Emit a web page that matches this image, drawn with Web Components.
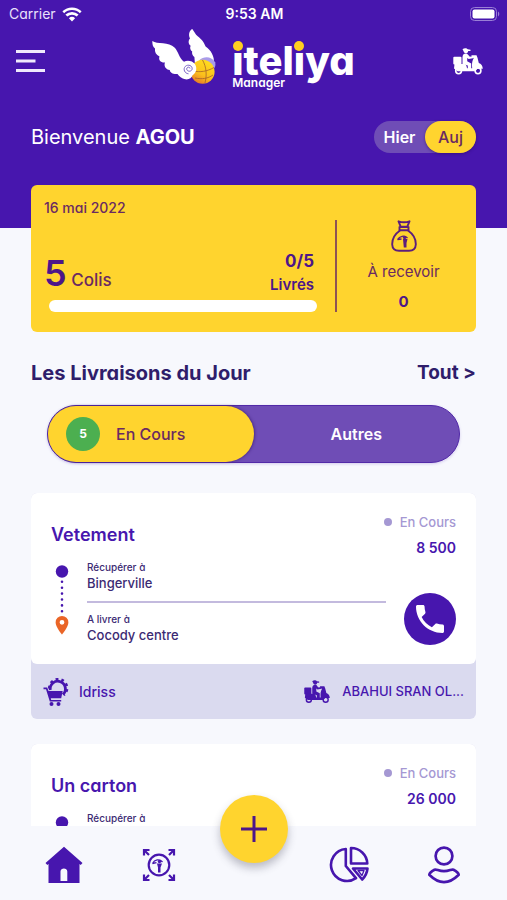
<!DOCTYPE html>
<html lang="fr">
<head>
  <meta charset="utf-8">
  <meta name="viewport" content="width=device-width, initial-scale=1">
  <title>iteliya Manager</title>
  <style>
    :root {
      --purple: #4716ae;
      --purple-soft: #6f4db6;
      --ink: #2f1d6b;
      --yellow: #ffd42e;
      --plum: #6a2a62;
      --page: #f7f8fd;
      --lilac: #a598d3;
    }
    body {
      margin: 0;
      background: var(--page);
      color: var(--ink);
      font-family: Inter, "Noto Sans", sans-serif;
      font-feature-settings: "cv11";
    }
  </style>
</head>
<body>
  <manager-app></manager-app>

  <script>
    'use strict';

    (function () {
      // every drawing of the app, by name
      const icons = {
        wifi: `<svg viewBox="0 0 20 15" width="20" height="15" fill="#fff">
          <path d="M10 14.5 6.900 11.200a4.500 4.500 0 0 1 6.200 0z"/>
          <path d="M3.400 7.600a9.400 9.400 0 0 1 13.200 0l-1.900 2a6.800 6.800 0 0 0-9.400 0z"/>
          <path d="M.4 4.300a13.900 13.900 0 0 1 19.200 0l-1.700 1.900a11.300 11.300 0 0 0-15.800 0z"/></svg>`,
        battery: `<svg viewBox="0 0 30 14" width="30" height="14">
          <rect x=".5" y=".5" width="26" height="13" rx="4" fill="none" stroke="#9a7fd6"/>
          <rect x="2.500" y="2.500" width="22" height="9" rx="2" fill="#fff"/>
          <path d="M28 4.600c1.700.7 1.700 4.100 0 4.800z" fill="#9a7fd6"/></svg>`,
        menu: `<svg viewBox="0 0 29 22" width="29" height="22" fill="#efe9fc">
          <path d="M0 0h29v3H0zM0 9.500h19.500v3H0zM0 19h29v3H0z"/></svg>`,
        wings: `<svg viewBox="0 0 64 56" width="64" height="56">
          <defs><linearGradient id="ball" x1="0" y1="1" x2=".5" y2="0">
            <stop offset="0" stop-color="#e0602c"/><stop offset=".5" stop-color="#fbc01c"/><stop offset="1" stop-color="#ffd91f"/>
          </linearGradient></defs>
          <path d="M40.300 0C37.500 1.200 36 5.500 38 9.500c-2 2-1.700 5.500.6 7.200-1 2.200-.2 4.600 1.600 5.700-.6 2 .4 4.200 2.200 5.600L43 36l19-1c.6-8-3-13.500-8.400-17.400-2-5.600-5-8-7.600-10.100C43 5 42.400 2.500 40.300 0z" fill="#fff"/>
          <path d="M47 31.500c5-4.500 12-4.500 16.300 2 .5 3-.3 5-1.300 6z" fill="#a99bea"/>
          <circle cx="50.600" cy="42.800" r="12" fill="url(#ball)"/>
          <g fill="none" stroke="#a5622a" stroke-width=".8">
            <path d="M41 42c7 1.500 14 .5 21-3.500M43 49c7 1.500 13 .5 18-3M50.500 31c4 7 4.500 15 2.500 23"/>
          </g>
          <path d="M.3 12C5 15.500 17 12.500 22.500 18.500c4 4 4.500 10.500 9.500 14.200 3-1.700 8.500-1.200 11 2.500 2.500 4 1.200 8.800-2.300 10.800-1 3-4 5-7.500 4.300-3.500-.6-6-2.800-7.700-5.300-4 .6-7.500-1.200-7.700-4-4-.4-6.300-4-4.800-7.500-4.500.3-6.800-2.500-5.500-6-3.500-1.500-5-4.500-4.500-8C.6 18 .3 14.500.3 12z" fill="#fff"/>
          <path d="M38 39.500c0-2-3.500-1.800-3.300.6.2 2.500 4.300 3 5.300.4 1.200-3.600-4-5.900-6.800-3-2.400 2.800-.5 6.900 3.300 7.300" fill="none" stroke="#7d66c8" stroke-width="1"/></svg>`,
        scooter: `<svg viewBox="0 0 30 27" width="30" height="27" fill="currentColor">
          <path d="M9.500 1.300c2-1.700 4.500-1 5.300 0l2.700.5v1.300h-2.300c-.2 3-4.200 3-4.700 0z"/>
          <path d="M9.500 9c.2-2.500 1.500-3.500 3.200-3.500 1.300 0 2 .6 2.600 1.600l1.500 1.600 3.200-.5v2l-4.300.7-1.500-1v3.300l4 2.200v5.800h-3.400v-3.700l-5.300-1.500z"/>
          <rect x=".3" y="8.800" width="8.200" height="7.800" rx="1"/>
          <path d="M1.500 16h9.700c2 0 2.500 2.500 2.800 4.300h5.200c-.4-5 0-7.300 1.500-10L18.500 8.500V7.200h5l1 2.500 1.300 5.300c2.300.9 3.900 2.700 4 5.700h-5.500l-1.800 2.500H4.500L1 20.600z"/>
          <g fill="none" stroke="currentColor" stroke-width="1.600">
            <circle cx="5.600" cy="22.800" r="2.900"/><circle cx="25" cy="22.800" r="2.900"/></g></svg>`,
        bag: `<svg viewBox="0 0 26 32" width="26" height="32" fill="none" stroke="#5d1e7c" stroke-width="1.900" stroke-linejoin="round">
          <path d="M7.500 1.300c3 1 8 1 11 0l-2.300 5.500H9.800zM8.500 7h9v3.200h-9z"/>
          <path d="M9 10.500C4 14 1 19 1.200 24.500 1.400 29 4 30.700 8 30.700h10c4 0 6.600-1.700 6.800-6.200C25 19 22 14 17 10.500"/>
          <path d="M6.500 19.500c2-3.500 7-4.500 10-1.500M6.500 19.500l4-.5" stroke-width="1.300"/>
          <path d="M12 19h4.500l-1 4v4.500h-2.700z" fill="#5d1e7c" stroke="none"/><circle cx="13.600" cy="17.500" r="1.700" fill="#5d1e7c" stroke="none"/></svg>`,
        route: `<svg viewBox="0 0 22 76" width="22" height="76">
          <circle cx="11" cy="12.500" r="6.200" fill="#4716ae"/>
          <path d="M11 22.800v30.500" stroke="#4716ae" stroke-width="2.600" stroke-linecap="round" stroke-dasharray="0 5.900"/>
          <path d="M11 57a6.400 6.400 0 0 0-6.400 6.400C4.600 68 11 75.500 11 75.500s6.400-7.500 6.400-12.100A6.400 6.400 0 0 0 11 57zm0 8.700a2.400 2.400 0 1 1 0-4.800 2.400 2.400 0 0 1 0 4.800z" fill="#ea6527"/></svg>`,
        phone: `<svg viewBox="3 3 18 18" width="28" height="28" fill="#fff">
          <path d="M6.620 10.790c1.440 2.830 3.760 5.140 6.590 6.590l2.200-2.200c.27-.27.67-.36 1.020-.24 1.120.37 2.330.57 3.570.57.55 0 1 .45 1 1V20c0 .55-.45 1-1 1-9.390 0-17-7.610-17-17 0-.55.45-1 1-1h3.500c.55 0 1 .45 1 1 0 1.250.2 2.450.57 3.570.11.35.03.74-.25 1.020z"/></svg>`,
        cart: `<svg viewBox="0 0 26 28" width="26" height="28" fill="#4716ae">
          <path d="M7.300 12a7.600 7.600 0 1 1 12.600 4.500" fill="none" stroke="#4716ae" stroke-width="2.800"/>
          <path d="M6.300 10.500a8.900 8.900 0 1 1 14.500 6.500" fill="none" stroke="#4716ae" stroke-width="2.600" stroke-dasharray="2.800 3"/>
          <path d="M.5 9.500h3.700l1.300 3.600h14.200l-1.500 7.200H7.800l.4 1.600h10v1.700H6.800L3 11.200H.5z"/>
          <circle cx="8.500" cy="26" r="2"/><circle cx="15.500" cy="26" r="2"/></svg>`,
        home: `<svg viewBox="0 0 38 38" width="38" height="38" fill="#4716ae">
          <path fill-rule="evenodd" d="M19 .8 37.500 17l-1.800 2-1.200-1V37h-31V18l-1.200 1L.5 17zM15.500 35h6.800v-9.500c0-4-6.800-4-6.800 0z"/></svg>`,
        scan: `<svg viewBox="0 0 34 34" width="34" height="34" fill="none" stroke="#4716ae" stroke-width="2.200">
          <circle cx="17" cy="17" r="10.300"/>
          <path d="M2 7.500V2h5.500M2 2l5 5M26.500 2H32v5.500M32 2l-5 5M2 26.500V32h5.500M2 32l5-5M26.500 32H32v-5.500M32 32l-5-5"/>
          <path d="M10.500 15.500c2-4 7-5 10-1.500M10.500 15.500l4-.8" stroke-width="1.300"/>
          <path d="M15 15.500h5l-1.500 4v5h-2.500v-5z" fill="#4716ae" stroke="none"/><circle cx="17.500" cy="13.500" r="1.700" fill="#4716ae" stroke="none"/></svg>`,
        pie: `<svg viewBox="0 0 40 38" width="40" height="38" fill="none" stroke="#4716ae" stroke-width="2.600" stroke-linejoin="round">
          <path d="M16.800 3v17l10.200 12.200A16 16 0 1 1 16.800 3z"/>
          <path d="M22 2v15.500h16.300A16.200 16.200 0 0 0 22 2z"/>
          <path d="M24 22.500h14.500c-.5 4.500-2.300 8-5.300 11z"/><path d="M29 24.500h6l-2 5z" stroke-width="1.300"/></svg>`,
        user: `<svg viewBox="0 0 34 38" width="34" height="38" fill="none" stroke="#4716ae" stroke-width="2.700" stroke-linejoin="round">
          <circle cx="17" cy="10" r="8.400"/>
          <path d="M7.500 23.700c2-.9 4 1.500 9.500 1.500s7.500-2.400 9.500-1.500c2.500 1.300 5 3.100 5.200 5.100C27 33.500 22 36.200 17 36.200S7 33.500 2.300 28.800c.2-2 2.700-3.800 5.200-5.100z"/></svg>`,
        plus: `<svg viewBox="0 0 26 26" width="26" height="26" fill="none" stroke="#4d1689" stroke-width="3"><path d="M13 0v26M0 13h26"/></svg>`,
      };

      class AppIcon extends HTMLElement {
        constructor() {
          super();
          this.attachShadow({ mode: 'open' });
        }

        connectedCallback() {
          const svg = icons[this.getAttribute('name')];
          this.shadowRoot.innerHTML = `
            <style>
              :host { display: inline-flex; align-items: flex-start; flex: none; }
              svg { display: block; width: var(--icon-width); height: auto; }
            </style>
            ${svg.replace('<svg', '<svg aria-hidden="true"')}
          `;
        }
      }

      class StatusBar extends HTMLElement {
        constructor() {
          super();
          this.attachShadow({ mode: 'open' }).innerHTML = `
            <style>
              :host {
                display: grid;
                grid-template-columns: 1fr auto 1fr;
                align-items: center;
                height: 28px;
                padding: 0 7px 0 9px;
                color: #e9e0fb;
                font-size: 14px;
                line-height: 20px;
              }
              .carrier { display: flex; align-items: center; gap: 6px; }
              time { font-weight: 600; color: #fff; }
              .battery { justify-self: end; }
            </style>
            <span class="carrier">Carrier <app-icon name="wifi"></app-icon></span>
            <time>9:53 AM</time>
            <app-icon class="battery" name="battery"></app-icon>
          `;
        }
      }

      class BrandLogo extends HTMLElement {
        constructor() {
          super();
          this.attachShadow({ mode: 'open' }).innerHTML = `
            <style>
              :host { display: flex; align-items: flex-start; gap: 16px; margin-bottom: 4px; color: #fff; }
              .words { display: block; padding-top: 14px; }
              .name { display: block; font-size: 40px; font-weight: 800; line-height: 36px; }
              .i { position: relative; }
              /* yellow dot laid over the letter's own */
              .i::before {
                content: '';
                position: absolute;
                left: 50%;
                top: 5px;
                width: 10px;
                height: 10px;
                margin-left: -5px;
                border-radius: 50%;
                background: #ffcf1f;
                box-shadow: 0 0 0 1px var(--purple);
              }
              .sub { display: block; font-size: 12px; font-weight: 600; line-height: 12px; margin-top: -2px; }
            </style>
            <app-icon name="wings"></app-icon>
            <span class="words">
              <span class="name"><span class="i">i</span>tel<span class="i">i</span>ya</span>
              <span class="sub">Manager</span>
            </span>
          `;
        }
      }

      class DayToggle extends HTMLElement {
        constructor() {
          super();
          const shadow = this.attachShadow({ mode: 'open' });
          shadow.innerHTML = `
            <style>
              :host { display: flex; height: 32px; border-radius: 16px; background: var(--purple-soft); }
              button {
                font: inherit;
                font-size: 16px;
                font-weight: 600;
                font-feature-settings: inherit;
                width: 51px;
                padding: 0;
                border: 0;
                border-radius: 16px;
                background: none;
                color: #fff;
                cursor: pointer;
              }
              button[aria-pressed="true"] {
                background: var(--yellow);
                color: var(--plum);
                font-weight: 500;
                box-shadow: 0 1px 3px rgb(40 10 90 / 50%);
              }
            </style>
            <button type="button" aria-pressed="false">Hier</button>
            <button type="button" aria-pressed="true">Auj</button>
          `;
          this.select = this.select.bind(this);
        }

        select(e) {
          this.shadowRoot.querySelectorAll('button').forEach((button) => {
            button.setAttribute('aria-pressed', button === e.currentTarget);
          });
        }

        connectedCallback() {
          this.shadowRoot.querySelectorAll('button').forEach((button) => {
            button.addEventListener('click', this.select, false);
          });
        }
      }

      class AppHeader extends HTMLElement {
        constructor() {
          super();
          this.attachShadow({ mode: 'open' }).innerHTML = `
            <style>
              :host { display: block; background: var(--purple); color: #fff; padding-bottom: 75px; }
              .top {
                display: grid;
                grid-template-columns: 1fr auto 1fr;
                align-items: center;
                height: 66px;
                padding: 0 16px;
              }
              button { display: flex; justify-self: start; padding: 0; border: 0; background: none; color: #fff; cursor: pointer; }
              .rider { justify-self: end; margin-right: 8px; }
              .welcome {
                display: flex;
                justify-content: space-between;
                align-items: center;
                margin-top: 27px;
                padding: 0 31px;
              }
              p { margin: 0; font-size: 20px; line-height: 28px; }
            </style>
            <status-bar></status-bar>
            <div class="top">
              <button type="button" aria-label="Menu"><app-icon name="menu"></app-icon></button>
              <brand-logo></brand-logo>
              <button class="rider" type="button" aria-label="Livreurs"><app-icon name="scooter"></app-icon></button>
            </div>
            <div class="welcome">
              <p><slot></slot></p>
              <day-toggle></day-toggle>
            </div>
          `;
        }
      }

      class SummaryCard extends HTMLElement {
        constructor() {
          super();
          this.attachShadow({ mode: 'open' }).innerHTML = `
            <style>
              :host {
                display: flex;
                position: relative;
                box-sizing: border-box;
                min-height: 147px;
                margin: -43px 31px 0;
                padding: 13px 6px 20px 13px;
                border-radius: 6px;
                background: var(--yellow);
                color: var(--plum);
              }
              .parcels { flex: 1; display: flex; flex-direction: column; justify-content: space-between; }
              .date { font-size: 14px; font-weight: 500; line-height: 20px; }
              .row { display: flex; justify-content: space-between; padding-right: 3px; margin-bottom: 3px; }
              .count { font-size: 17px; font-weight: 500; line-height: 24px; }
              .count b { font-size: 36px; font-weight: 600; line-height: 48px; color: #4d1689; }
              .done { text-align: right; color: #4d1689; font-weight: 700; font-size: 17px; line-height: 24px; }
              .done small { display: block; font-size: 15px; font-weight: 600; }
              .bar { height: 12px; margin-left: 5px; border-radius: 6px; background: #fff; }
              .cash {
                display: flex;
                flex-direction: column;
                align-items: center;
                justify-content: space-between;
                box-sizing: border-box;
                width: 135px;
                margin: 22px 0 0 18px;
                border-left: 2px solid #8d5355;
                font-size: 15px;
                line-height: 20px;
              }
              .cash b { color: #4d1689; }
            </style>
            <div class="parcels">
              <span class="date"><slot name="date"></slot></span>
              <div>
                <div class="row">
                  <span class="count"><b><slot name="count"></slot></b> Colis</span>
                  <span class="done"><slot name="done"></slot><small>Livrés</small></span>
                </div>
                <div class="bar" role="progressbar" aria-label="Colis livrés" aria-valuemin="0" aria-valuemax="5" aria-valuenow="0"></div>
              </div>
            </div>
            <div class="cash">
              <app-icon name="bag"></app-icon>
              <span>À recevoir</span>
              <b><slot name="cash"></slot></b>
            </div>
          `;
        }
      }

      class DeliveryTabs extends HTMLElement {
        constructor() {
          super();
          this.attachShadow({ mode: 'open' }).innerHTML = `
            <style>
              :host {
                display: grid;
                grid-template-columns: 1fr 1fr;
                box-sizing: border-box;
                height: 58px;
                margin: 18px 47px 30px;
                border: 1px solid #522aa8;
                border-radius: 29px;
                background: var(--purple-soft);
                box-shadow: 0 1px 3px rgb(71 22 174 / 20%);
              }
              button {
                display: flex;
                align-items: center;
                justify-content: center;
                padding: 0;
                border: 0;
                border-radius: 28px;
                background: none;
                color: #fff;
                font: inherit;
                font-feature-settings: inherit;
                font-size: 16px;
                font-weight: 600;
                cursor: pointer;
              }
              button[aria-selected="true"] {
                justify-content: flex-start;
                gap: 16px;
                padding-left: 18px;
                background: var(--yellow);
                color: var(--plum);
                font-weight: 500;
                box-shadow: 1px 0 3px rgb(40 10 90 / 50%);
              }
              .badge {
                width: 34px;
                border-radius: 50%;
                background: #4caf50;
                color: #fff;
                font-size: 12px;
                font-weight: 700;
                line-height: 34px;
              }
            </style>
            <button type="button" role="tab" aria-selected="true"><span class="badge">5</span>En Cours</button>
            <button type="button" role="tab" aria-selected="false">Autres</button>
          `;
        }

        connectedCallback() {
          this.setAttribute('role', 'tablist');
        }
      }

      class DeliveryCard extends HTMLElement {
        constructor() {
          super();
          this.attachShadow({ mode: 'open' }).innerHTML = `
            <style>
              :host { display: block; border-radius: 6px; background: #dadaef; color: var(--purple); }
              .body { padding: 19px 20px; border-radius: 6px; background: #fff; }
              .head { display: flex; justify-content: space-between; align-items: center; }
              h3 { margin: 0; font-size: 18px; font-weight: 600; line-height: 24px; }
              .state {
                display: flex;
                flex-direction: column;
                align-items: flex-end;
                gap: 6px;
                font-size: 14px;
                font-weight: 600;
                line-height: 20px;
              }
              .state span {
                display: flex;
                align-items: center;
                gap: 8px;
                color: var(--lilac);
                font-size: 13px;
                font-weight: 500;
              }
              .state span::before { content: ''; width: 8px; height: 8px; border-radius: 50%; background: var(--lilac); }
              .route { display: flex; margin-top: 1px; }
              dl {
                flex: 1;
                margin: 0 18px 2px 14px;
                color: #3b2a73;
                font-weight: 500;
                line-height: 16px;
              }
              dt { font-size: 10px; }
              dd { margin: 0; font-size: 13px; }
              dd + dt { margin-top: 10px; padding-top: 8px; border-top: 2px solid #c3bade; }
              .call {
                display: flex;
                align-items: center;
                justify-content: center;
                align-self: flex-end;
                width: 52px;
                height: 52px;
                padding: 0;
                border: 0;
                border-radius: 50%;
                background: var(--purple);
                cursor: pointer;
              }
              .people {
                display: flex;
                align-items: center;
                gap: 10px;
                height: 55px;
                padding: 0 12px;
                font-size: 14px;
                font-weight: 500;
              }
              .driver {
                --icon-width: 26px;
                display: flex;
                align-items: center;
                gap: 12px;
                margin-left: auto;
                font-size: 13px;
              }
            </style>
            <article>
              <div class="body">
                <div class="head">
                  <h3><slot name="title"></slot></h3>
                  <div class="state"><span>En Cours</span><slot name="price"></slot></div>
                </div>
                <div class="route">
                  <app-icon name="route"></app-icon>
                  <dl>
                    <dt>Récupérer à</dt>
                    <dd><slot name="from"></slot></dd>
                    <dt>A livrer à</dt>
                    <dd><slot name="to"></slot></dd>
                  </dl>
                  <button class="call" type="button" aria-label="Appeler"><app-icon name="phone"></app-icon></button>
                </div>
              </div>
              <div class="people">
                <app-icon name="cart"></app-icon>
                <slot name="client"></slot>
                <span class="driver"><app-icon name="scooter"></app-icon><slot name="driver"></slot></span>
              </div>
            </article>
          `;
        }
      }

      class BottomNav extends HTMLElement {
        constructor() {
          super();
          this.attachShadow({ mode: 'open' }).innerHTML = `
            <style>
              :host { display: block; position: relative; flex: none; background: var(--page); }
              nav {
                display: grid;
                grid-template-columns: 1fr 1fr 1fr 1fr 1fr;
                align-items: center;
                justify-items: center;
                height: 74px;
                padding: 4px 16px 0;
                box-sizing: border-box;
              }
              a { display: flex; }
              .add {
                position: absolute;
                left: 50%;
                top: -31px;
                display: flex;
                align-items: center;
                justify-content: center;
                width: 68px;
                height: 68px;
                margin-left: -34px;
                padding: 0;
                border: 0;
                border-radius: 50%;
                background: var(--yellow);
                box-shadow: 0 5px 9px rgb(60 60 80 / 32%);
                cursor: pointer;
              }
            </style>
            <nav>
              <a href="#accueil" aria-label="Accueil"><app-icon name="home"></app-icon></a>
              <a href="#scanner" aria-label="Scanner"><app-icon name="scan"></app-icon></a>
              <span></span>
              <a href="#bilan" aria-label="Bilan"><app-icon name="pie"></app-icon></a>
              <a href="#profil" aria-label="Profil"><app-icon name="user"></app-icon></a>
            </nav>
            <button class="add" type="button" aria-label="Ajouter"><app-icon name="plus"></app-icon></button>
          `;
        }
      }

      class ManagerApp extends HTMLElement {
        constructor() {
          super();
          this.attachShadow({ mode: 'open' }).innerHTML = `
            <style>
              :host { display: flex; flex-direction: column; height: 100vh; }
              main { flex: 1; min-height: 0; overflow-y: auto; scrollbar-width: none; }
              .heading {
                display: flex;
                justify-content: space-between;
                margin: 27px 31px 0;
                font-size: 20px;
                font-weight: 700;
                line-height: 28px;
              }
              h2 { margin: 0; font: inherit; }
              a { color: inherit; text-decoration: none; font-size: 19px; }
              .list { display: grid; gap: 25px; padding: 0 31px 40px; }
            </style>
            <main>
              <app-header>Bienvenue <b>AGOU</b></app-header>
              <summary-card>
                <span slot="date">16 mai 2022</span>
                <span slot="count">5</span>
                <span slot="done">0/5</span>
                <span slot="cash">0</span>
              </summary-card>
              <div class="heading"><h2>Les Livraisons du Jour</h2><a href="#tout">Tout &gt;</a></div>
              <delivery-tabs></delivery-tabs>
              <div class="list">
                <delivery-card>
                  <span slot="title">Vetement</span>
                  <span slot="price">8 500</span>
                  <span slot="from">Bingerville</span>
                  <span slot="to">Cocody centre</span>
                  <span slot="client">Idriss</span>
                  <span slot="driver">ABAHUI SRAN OL...</span>
                </delivery-card>
                <delivery-card>
                  <span slot="title">Un carton</span>
                  <span slot="price">26 000</span>
                </delivery-card>
              </div>
            </main>
            <bottom-nav></bottom-nav>
          `;
        }
      }

      customElements.define('app-icon', AppIcon);
      customElements.define('status-bar', StatusBar);
      customElements.define('brand-logo', BrandLogo);
      customElements.define('day-toggle', DayToggle);
      customElements.define('app-header', AppHeader);
      customElements.define('summary-card', SummaryCard);
      customElements.define('delivery-tabs', DeliveryTabs);
      customElements.define('delivery-card', DeliveryCard);
      customElements.define('bottom-nav', BottomNav);
      customElements.define('manager-app', ManagerApp);
    })();
  </script>
</body>
</html>
